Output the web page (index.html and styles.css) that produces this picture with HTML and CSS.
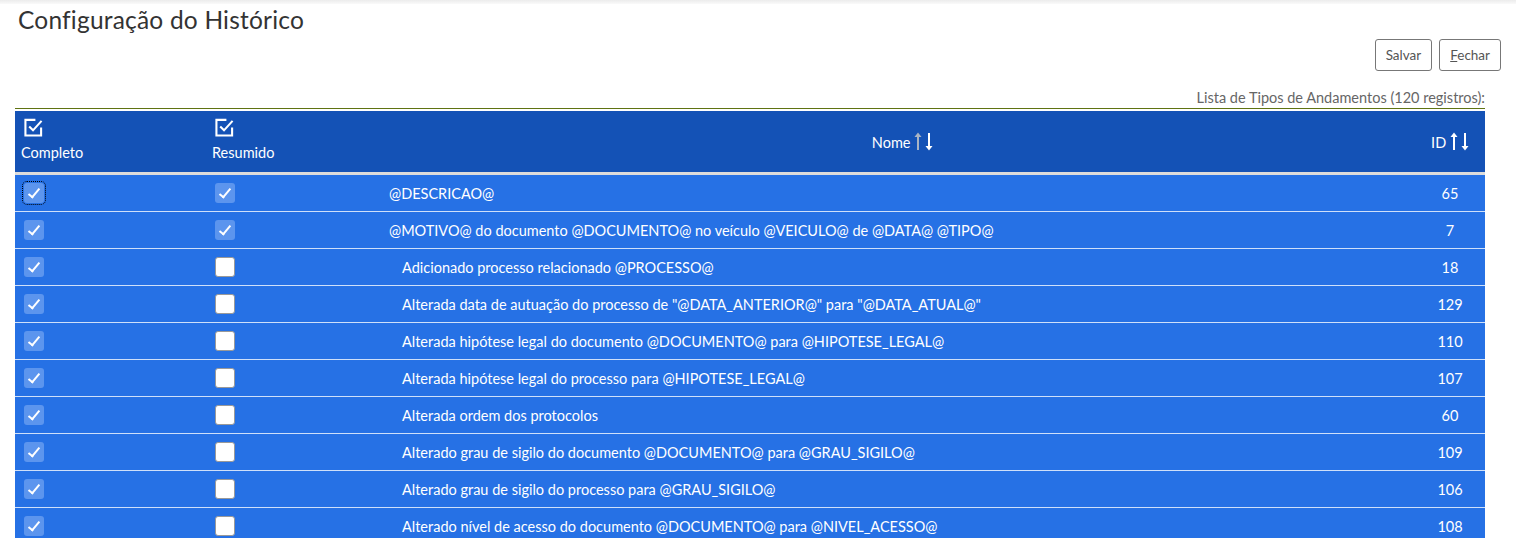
FILE: index.html
```html
<!DOCTYPE html>
<html lang="pt-BR">
<head>
<meta charset="utf-8">
<title>Configuração do Histórico</title>
<link rel="stylesheet" href="styles.css">
</head>
<body>
<div class="topbar"></div>
<div class="page">
  <h1 class="title">Configuração do Histórico</h1>
  <div class="actions">
    <button class="btn">Salvar</button>
    <button class="btn"><u>F</u>echar</button>
  </div>
  <div class="caption">Lista de Tipos de Andamentos (120 registros):</div>
  <table class="grid">
    <thead>
      <tr>
        <th class="c-comp">
          <svg class="hicon" viewBox="0 0 20 20" width="19" height="19"><path d="M18 10v8.5H1.5V2H12" fill="none" stroke="#fff" stroke-width="2.2"/><path d="M5.5 9l4 4L18.5 3" fill="none" stroke="#fff" stroke-width="2.2"/></svg>
          <div class="hlabel">Completo</div>
        </th>
        <th class="c-res">
          <svg class="hicon" viewBox="0 0 20 20" width="19" height="19"><path d="M18 10v8.5H1.5V2H12" fill="none" stroke="#fff" stroke-width="2.2"/><path d="M5.5 9l4 4L18.5 3" fill="none" stroke="#fff" stroke-width="2.2"/></svg>
          <div class="hlabel">Resumido</div>
        </th>
        <th class="c-nome">Nome <span class="sort"><svg viewBox="0 0 8 19" width="8" height="19"><path d="M4 18V3" stroke="#a9b4c4" stroke-width="2"/><path d="M0.5 5L4 0.5 7.5 5z" fill="#a9b4c4"/></svg><svg viewBox="0 0 8 19" width="8" height="19"><path d="M4 1v15" stroke="#fff" stroke-width="2"/><path d="M0.5 14L4 18.5 7.5 14z" fill="#fff"/></svg></span></th>
        <th class="c-id">ID <span class="sort"><svg viewBox="0 0 8 19" width="8" height="19"><path d="M4 18V3" stroke="#fff" stroke-width="2"/><path d="M0.5 5L4 0.5 7.5 5z" fill="#fff"/></svg><svg viewBox="0 0 8 19" width="8" height="19"><path d="M4 1v15" stroke="#fff" stroke-width="2"/><path d="M0.5 14L4 18.5 7.5 14z" fill="#fff"/></svg></span></th>
      </tr>
    </thead>
    <tbody>
      <tr>
        <td><span class="cb on focus"></span></td>
        <td><span class="cb on"></span></td>
        <td class="nome tight">@DESCRICAO@</td>
        <td class="id">65</td>
      </tr>
      <tr>
        <td><span class="cb on"></span></td>
        <td><span class="cb on"></span></td>
        <td class="nome tight">@MOTIVO@ do documento @DOCUMENTO@ no veículo @VEICULO@ de @DATA@ @TIPO@</td>
        <td class="id">7</td>
      </tr>
      <tr>
        <td><span class="cb on"></span></td>
        <td><span class="cb"></span></td>
        <td class="nome">Adicionado processo relacionado @PROCESSO@</td>
        <td class="id">18</td>
      </tr>
      <tr>
        <td><span class="cb on"></span></td>
        <td><span class="cb"></span></td>
        <td class="nome">Alterada data de autuação do processo de "@DATA_ANTERIOR@" para "@DATA_ATUAL@"</td>
        <td class="id">129</td>
      </tr>
      <tr>
        <td><span class="cb on"></span></td>
        <td><span class="cb"></span></td>
        <td class="nome">Alterada hipótese legal do documento @DOCUMENTO@ para @HIPOTESE_LEGAL@</td>
        <td class="id">110</td>
      </tr>
      <tr>
        <td><span class="cb on"></span></td>
        <td><span class="cb"></span></td>
        <td class="nome">Alterada hipótese legal do processo para @HIPOTESE_LEGAL@</td>
        <td class="id">107</td>
      </tr>
      <tr>
        <td><span class="cb on"></span></td>
        <td><span class="cb"></span></td>
        <td class="nome">Alterada ordem dos protocolos</td>
        <td class="id">60</td>
      </tr>
      <tr>
        <td><span class="cb on"></span></td>
        <td><span class="cb"></span></td>
        <td class="nome">Alterado grau de sigilo do documento @DOCUMENTO@ para @GRAU_SIGILO@</td>
        <td class="id">109</td>
      </tr>
      <tr>
        <td><span class="cb on"></span></td>
        <td><span class="cb"></span></td>
        <td class="nome">Alterado grau de sigilo do processo para @GRAU_SIGILO@</td>
        <td class="id">106</td>
      </tr>
      <tr>
        <td><span class="cb on"></span></td>
        <td><span class="cb"></span></td>
        <td class="nome">Alterado nível de acesso do documento @DOCUMENTO@ para @NIVEL_ACESSO@</td>
        <td class="id">108</td>
      </tr>
    </tbody>
  </table>
</div>
</body>
</html>
```

FILE: styles.css
```css
html, body {
  margin: 0;
  padding: 0;
  background: #fff;
  font-family: "Lato", "Open Sans", sans-serif;
  color: #333;
  overflow: hidden;
}
.topbar {
  height: 4px;
  background: linear-gradient(#ececec, #fafafa);
}
.page {
  padding: 0 31px 0 15px;
}
.title {
  margin: 0 0 0 3px;
  font-weight: 400;
  font-size: 24.5px;
  line-height: 32px;
  color: #333;
  letter-spacing: 0.2px;
}
.actions {
  display: flex;
  justify-content: flex-end;
  gap: 7px;
  margin-top: 3px;
  margin-right: -16px;
}
.btn {
  font-family: inherit;
  font-size: 13.5px;
  color: #555;
  background: #fff;
  border: 1px solid #777;
  border-radius: 3px;
  height: 32px;
  padding: 0 10px;
}
.caption {
  text-align: right;
  font-size: 14.5px;
  color: #666;
  margin-top: 18px;
  line-height: 18px;
  padding-bottom: 1px;
  border-bottom: 1px solid #5f7312;
}
.grid {
  width: 100%;
  border-collapse: collapse;
  margin-top: 2px;
  color: #fff;
  font-size: 14.5px;
}
.grid thead th {
  background: #1452b6;
  font-weight: 400;
  height: 61px;
  padding: 0;
  border-bottom: 3px solid #dcdcdc;
}
.grid th.c-comp, .grid th.c-res {
  text-align: left;
  vertical-align: top;
}
.grid th.c-comp { width: 185px; padding-left: 6px; }
.grid th.c-res { width: 172px; padding-left: 6px; }
.hicon { display: block; margin: 7px 0 0 3px; }
.hlabel { margin-top: 7px; }
.grid th.c-nome { text-align: center; padding-left: 6px; }
.grid th.c-id { width: 70px; text-align: center; }
.sort { display: inline-flex; gap: 3px; vertical-align: -3px; margin-left: 0; }
.grid tbody td {
  background: #2671e5;
  height: 36px;
  padding: 0;
  border-bottom: 1px solid #cfe0fa;
}
.grid tbody td:first-child { padding-left: 9px; }
.grid tbody td:nth-child(2) { padding-left: 9px; }
.cb {
  display: block;
  width: 20px;
  height: 20px;
  box-sizing: border-box;
  border-radius: 3px;
  background: #fff;
  border: 1px solid #999;
  position: relative;
}
.cb.on {
  background: #5c95ee;
  border: none;
}
.cb.on::after {
  content: "";
  position: absolute;
  left: 7px;
  top: 3px;
  width: 4px;
  height: 10px;
  border: solid #fff;
  border-width: 0 2.5px 2.5px 0;
  transform: rotate(40deg);
}
.cb.focus {
  outline: 1px dotted #000;
  outline-offset: 1px;
}
.nome { padding-left: 18px !important; }
.nome.tight { padding-left: 5px !important; }
.id { text-align: center; }
```
